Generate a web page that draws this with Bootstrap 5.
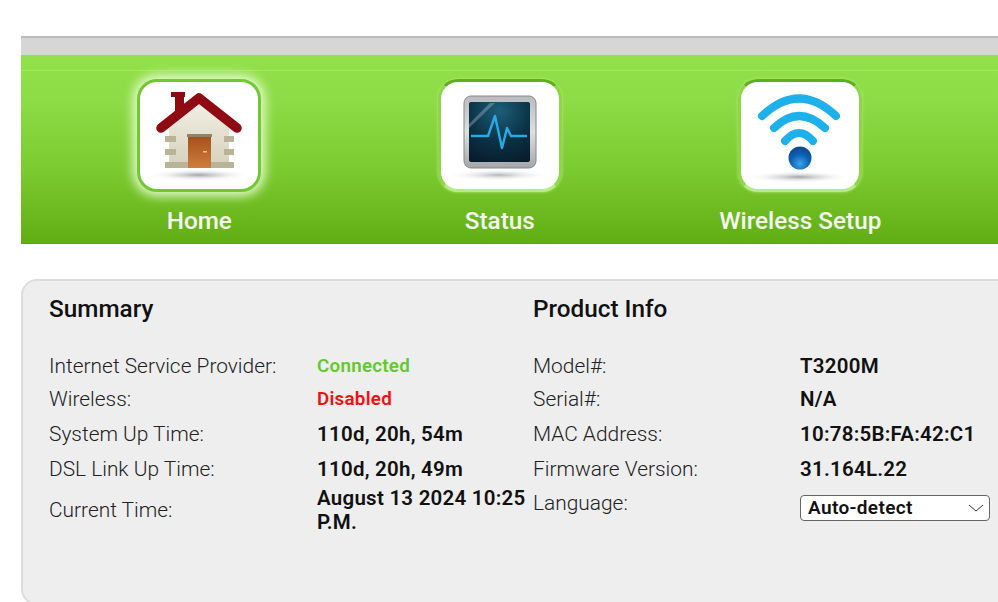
<!DOCTYPE html>
<html lang="en">
<head>
<meta charset="utf-8">
<title>Summary</title>
<link href="https://cdn.jsdelivr.net/npm/bootstrap@5.3.0/dist/css/bootstrap.min.css" rel="stylesheet">
<style>
html,body{height:602px;overflow:hidden;background:#fff}
body{font-family:Roboto,"Liberation Sans",sans-serif;color:#111}
.shell{height:602px;overflow:hidden;padding:36px 0 0 21px}
.topstrip{height:19px;background:#d6d6d6;border-top:2px solid #bcbcbc;margin-right:-20px}
.hero{height:189px;margin-right:-20px;padding-top:15px;background:linear-gradient(#92e14a 0,#8ddb45 25%,#7ccb30 60%,#61ae14 100%);border-bottom:1px solid #5aa60f}
.hero-inner{border-top:1px solid #a0e85f;padding:8px 0 0 28px}
.navcell{width:300.5px;color:#f6f8f2;font-size:24.3px;font-weight:500;line-height:27px;text-decoration:none}
.tile{width:124px;height:113px;background:#fff;border:3px solid #8ed54a;border-top-color:#5fae1b;border-bottom-color:#b4ec82;border-radius:20px;margin-bottom:15px;box-shadow:0 0 3px #b7ec87}
.tile svg{display:block;margin:-3px;filter:blur(.55px)}
.tile.current{border-color:#73c735;box-shadow:0 0 11px 4px #e6fbd0}
.panel{margin:35px -20px 0 0;height:326px;background:#eee;border:2px solid #dcdcdc;border-radius:16px;padding:13px 26px}
.col-sum{width:484px}
.panel h2{font-size:24.3px;font-weight:500;line-height:30px;margin:0 0 25px;color:#111}
.info{border-collapse:collapse;table-layout:fixed;font-size:20.9px;line-height:24px}
.info-left{width:484px}
.info-right{width:458px}
.info-left th{width:268px}
.info-right th{width:267px}
.info th{font-weight:300;padding:0;vertical-align:middle;height:35px;color:#222}
.info tr:nth-child(1) th{height:33px}
.info tr:nth-child(2) th{height:34px}
.info td{font-size:20.5px;font-weight:600;padding:0;letter-spacing:.25px;vertical-align:middle}
.info td.ok{color:#62c92e;font-size:18.8px}
.info td.bad{color:#f80d0d;font-size:18.8px}
.info .langlabel{vertical-align:top;padding-top:5px}
.info .langcell{vertical-align:top;padding-top:9px}
.langselect{width:190px;height:26px;padding:0 24px 0 7px;font-family:Roboto,"Liberation Sans",sans-serif;font-size:19px;font-weight:600;letter-spacing:.35px;line-height:24px;color:#111;border:1px solid #666;border-radius:4px;background-color:#fff;background-image:url("data:image/svg+xml,%3csvg xmlns='http://www.w3.org/2000/svg' viewBox='0 0 16 8'%3e%3cpath d='M1 1l7 6 7-6' fill='none' stroke='%23333' stroke-width='1'/%3e%3c/svg%3e");background-position:right 5px center;background-size:16px 8px}
</style>
</head>
<body>
<div class="shell">
  <div class="topstrip"></div>
  <div class="hero">
    <nav class="hero-inner d-flex">
      <a href="#" class="navcell d-flex flex-column align-items-center">
        <span class="tile current d-block">
          <svg width="124" height="113" viewBox="0 0 124 113" aria-hidden="true">
            <defs>
              <linearGradient id="wall" x1="0" y1="0" x2="0" y2="1"><stop offset="0" stop-color="#f4f1e6"/><stop offset="1" stop-color="#d6d0bb"/></linearGradient>
              <linearGradient id="door" x1="0" y1="0" x2="0" y2="1"><stop offset="0" stop-color="#a5521a"/><stop offset="1" stop-color="#cc7e3e"/></linearGradient>
              <radialGradient id="shade"><stop offset="0" stop-color="#a0a2a8"/><stop offset="1" stop-color="#fff" stop-opacity="0"/></radialGradient>
            </defs>
            <ellipse cx="62" cy="96" rx="52" ry="6" fill="url(#shade)"/>
            <path d="M62 20 92 46V89H32V46Z" fill="url(#wall)"/>
            <path d="M28 57h11v6H28zM28 70h11v6H28zM87 57h10v6H87zM87 70h10v6H87zM28 83h69v6H28z" fill="#b9b497"/>
            <rect x="50" y="55" width="25" height="3" fill="#8a8468"/>
            <rect x="51" y="58" width="23" height="31" fill="url(#door)"/>
            <rect x="66" y="72" width="4" height="1.5" fill="#f0c88a"/>
            <path d="M34 13h14v5h-1v14H38V18h-4z" fill="#8d0a12"/>
            <path d="M24 49 62 19 100 49" fill="none" stroke="#8f0a12" stroke-width="9.5" stroke-linecap="round" stroke-linejoin="round"/>
          </svg>
        </span>
        <span>Home</span>
      </a>
      <a href="#" class="navcell d-flex flex-column align-items-center">
        <span class="tile d-block">
          <svg width="124" height="113" viewBox="0 0 124 113" aria-hidden="true">
            <defs>
              <linearGradient id="bezel" x1="0" y1="0" x2="0" y2="1"><stop offset="0" stop-color="#b9bcbe"/><stop offset=".5" stop-color="#dedfdf"/><stop offset="1" stop-color="#a4a7a9"/></linearGradient>
              <radialGradient id="scr" cx=".5" cy=".15" r=".9"><stop offset="0" stop-color="#1c5f78"/><stop offset=".55" stop-color="#0c3347"/><stop offset="1" stop-color="#081d2c"/></radialGradient>
            </defs>
            <ellipse cx="61" cy="96" rx="52" ry="6" fill="url(#shade)" opacity=".8"/>
            <rect x="26" y="17" width="72" height="72" rx="7" fill="url(#bezel)" stroke="#84888a"/>
            <rect x="31" y="23" width="61" height="60" rx="2" fill="url(#scr)"/>
            <path d="M31 45 52 24H57L31 49Z" fill="#fff" opacity=".25"/>
            <path d="M33 57H50L57 37 64 69 69 49 73 57H89" fill="none" stroke="#2aa9e6" stroke-width="2.4" stroke-linejoin="round"/>
          </svg>
        </span>
        <span>Status</span>
      </a>
      <a href="#" class="navcell d-flex flex-column align-items-center">
        <span class="tile d-block">
          <svg width="124" height="113" viewBox="0 0 124 113" aria-hidden="true">
            <defs>
              <radialGradient id="ball" cx=".5" cy=".75" r=".7"><stop offset="0" stop-color="#3ba4e8"/><stop offset=".6" stop-color="#0c5fb4"/><stop offset="1" stop-color="#0a4a94"/></radialGradient>
            </defs>
            <ellipse cx="61" cy="98" rx="52" ry="6" fill="url(#shade)"/>
            <g fill="none" stroke="#1eb0ea" stroke-width="8" stroke-linecap="round">
              <path d="M24 37Q61 2 98 37"/>
              <path d="M36 49Q61 25 87 49"/>
              <path d="M47 62Q61 46 75 62"/>
            </g>
            <circle cx="62" cy="79" r="11.5" fill="url(#ball)"/>
          </svg>
        </span>
        <span>Wireless Setup</span>
      </a>
    </nav>
  </div>
  <section class="panel d-flex">
    <div class="col-sum">
      <h2>Summary</h2>
      <table class="info info-left">
        <tr><th>Internet Service Provider:</th><td class="ok">Connected</td></tr>
        <tr><th>Wireless:</th><td class="bad">Disabled</td></tr>
        <tr><th>System Up Time:</th><td>110d, 20h, 54m</td></tr>
        <tr><th>DSL Link Up Time:</th><td>110d, 20h, 49m</td></tr>
        <tr><th>Current Time:</th><td>August 13 2024 10:25 P.M.</td></tr>
      </table>
    </div>
    <div>
      <h2>Product Info</h2>
      <table class="info info-right">
        <tr><th>Model#:</th><td>T3200M</td></tr>
        <tr><th>Serial#:</th><td>N/A</td></tr>
        <tr><th>MAC Address:</th><td>10:78:5B:FA:42:C1</td></tr>
        <tr><th>Firmware Version:</th><td>31.164L.22</td></tr>
        <tr><th class="langlabel">Language:</th><td class="langcell"><select class="form-select langselect"><option>Auto-detect</option></select></td></tr>
      </table>
    </div>
  </section>
</div>
<script src="https://cdn.jsdelivr.net/npm/bootstrap@5.3.0/dist/js/bootstrap.bundle.min.js"></script>
</body>
</html>
